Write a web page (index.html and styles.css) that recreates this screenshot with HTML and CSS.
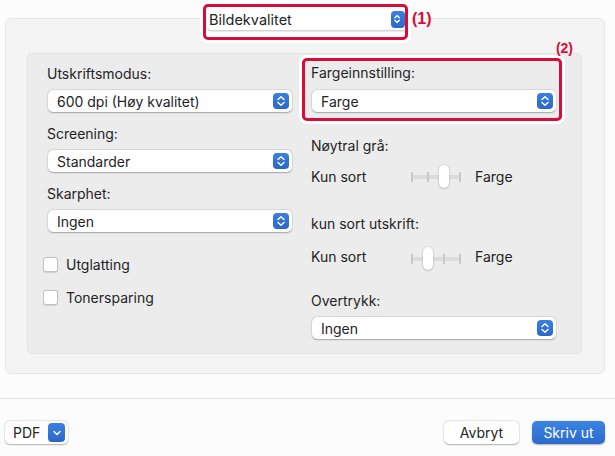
FILE: index.html
```html
<!DOCTYPE html>
<html>
<head>
<meta charset="utf-8">
<link rel="stylesheet" href="styles.css">
</head>
<body>
<div class="page">
  <div class="tab-hl">
    <div class="popup popup-top">
      <span class="pv">Bildekvalitet</span>
      <span class="arrow"><svg viewBox="0 0 16 16" width="14" height="16"><path d="M4.5 6.5 L7 4 L9.5 6.5 M4.5 9.5 L7 12 L9.5 9.5" fill="none" stroke="#fff" stroke-width="1.5" stroke-linecap="round" stroke-linejoin="round"/></svg></span>
    </div>
  </div>
  <div class="mark mark1">(1)</div>

  <div class="panel">
    <div class="inner">
      <div class="col">
        <div class="label">Utskriftsmodus:</div>
        <div class="popup"><span class="pv">600 dpi (Høy kvalitet)</span><span class="arrow"><svg viewBox="0 0 16 16" width="16" height="16"><path d="M5 6.5 L8 3.8 L11 6.5 M5 9.5 L8 12.2 L11 9.5" fill="none" stroke="#fff" stroke-width="1.5" stroke-linecap="round" stroke-linejoin="round"/></svg></span></div>
        <div class="label">Screening:</div>
        <div class="popup"><span class="pv">Standarder</span><span class="arrow"><svg viewBox="0 0 16 16" width="16" height="16"><path d="M5 6.5 L8 3.8 L11 6.5 M5 9.5 L8 12.2 L11 9.5" fill="none" stroke="#fff" stroke-width="1.5" stroke-linecap="round" stroke-linejoin="round"/></svg></span></div>
        <div class="label">Skarphet:</div>
        <div class="popup"><span class="pv">Ingen</span><span class="arrow"><svg viewBox="0 0 16 16" width="16" height="16"><path d="M5 6.5 L8 3.8 L11 6.5 M5 9.5 L8 12.2 L11 9.5" fill="none" stroke="#fff" stroke-width="1.5" stroke-linecap="round" stroke-linejoin="round"/></svg></span></div>
        <label class="check first"><span class="box"></span>Utglatting</label>
        <label class="check"><span class="box"></span>Tonersparing</label>
      </div>
      <div class="col right">
        <div class="hl">
          <div class="label">Fargeinnstilling:</div>
          <div class="popup"><span class="pv">Farge</span><span class="arrow"><svg viewBox="0 0 16 16" width="16" height="16"><path d="M5 6.5 L8 3.8 L11 6.5 M5 9.5 L8 12.2 L11 9.5" fill="none" stroke="#fff" stroke-width="1.5" stroke-linecap="round" stroke-linejoin="round"/></svg></span></div>
          <div class="mark mark2">(2)</div>
        </div>
        <div class="label l-ng">Nøytral grå:</div>
        <div class="srow s1">
          <span class="sl">Kun sort</span>
          <div class="slider">
            <span class="track"></span>
            <span class="tick t0"></span><span class="tick t1"></span><span class="tick t2"></span><span class="tick t3"></span>
            <span class="thumb th2"></span>
          </div>
          <span class="sr">Farge</span>
        </div>
        <div class="label l-ks">kun sort utskrift:</div>
        <div class="srow s2">
          <span class="sl">Kun sort</span>
          <div class="slider">
            <span class="track"></span>
            <span class="tick t0"></span><span class="tick t1"></span><span class="tick t2"></span><span class="tick t3"></span>
            <span class="thumb th1"></span>
          </div>
          <span class="sr">Farge</span>
        </div>
        <div class="label l-ov">Overtrykk:</div>
        <div class="popup"><span class="pv">Ingen</span><span class="arrow"><svg viewBox="0 0 16 16" width="16" height="16"><path d="M5 6.5 L8 3.8 L11 6.5 M5 9.5 L8 12.2 L11 9.5" fill="none" stroke="#fff" stroke-width="1.5" stroke-linecap="round" stroke-linejoin="round"/></svg></span></div>
      </div>
    </div>
  </div>

  <div class="sep"></div>

  <div class="footer">
    <div class="btn pdf"><span>PDF</span><span class="darrow"><svg viewBox="0 0 16 18" width="16" height="18"><path d="M5 7.5 L8 10.5 L11 7.5" fill="none" stroke="#fff" stroke-width="1.5" stroke-linecap="round" stroke-linejoin="round"/></svg></span></div>
    <div class="spacer"></div>
    <div class="btn cancel">Avbryt</div>
    <div class="btn primary">Skriv ut</div>
  </div>
</div>
</body>
</html>
```
FILE: styles.css
```css
html, body {
  margin: 0;
  padding: 0;
  background: #fcfcfc;
}
body {
  font-family: Inter, "Noto Sans", sans-serif;
  font-size: 14px;
  color: #242424;
  width: 615px;
  height: 456px;
  overflow: hidden;
}
.page {
  position: relative;
  padding-top: 18px;
}
.tab-hl {
  position: absolute;
  left: 203px;
  top: 4px;
  width: 199px;
  height: 30px;
  border: 3px solid #d80c3a;
  border-radius: 5px;
  background: #fff;
  box-shadow: 0 0 0 3px #fff;
  overflow: hidden;
  z-index: 2;
}
.tab-hl .popup-top {
  margin: 1px 0 0 1px;
  height: 22px;
  padding: 0 0 0 2px;
  border-radius: 4px 0 0 4px;
  box-shadow: 0 1.5px 0 #d4d4d4;
  font-size: 14.5px;
}
.mark {
  position: absolute;
  color: #d80c3a;
  font-weight: 700;
  font-size: 14px;
  font-family: "Liberation Sans", Arial, sans-serif;
  line-height: 16px;
}
.mark1 {
  left: 412px;
  top: 11px;
  font-size: 16px;
}
.panel {
  margin: 0 10px 0 5px;
  height: 356px;
  padding: 34px 22px 0 21px;
  background: #f4f4f4;
  border: 1px solid #e6e6e6;
  border-radius: 6px;
  box-sizing: border-box;
}
.inner {
  height: 301px;
  background: #ececec;
  border: 1px solid #e2e2e2;
  border-radius: 5px;
  display: flex;
  gap: 19px;
  padding: 12px 0 0 19px;
  box-sizing: border-box;
}
.col {
  width: 245px;
  display: flex;
  flex-direction: column;
}
.label {
  line-height: 16px;
  height: 16px;
  white-space: nowrap;
}
.popup {
  display: flex;
  align-items: center;
  height: 22px;
  margin-left: 1px;
  padding: 0 3px 0 9px;
  background: #fff;
  border-radius: 5px;
  box-shadow: 0 0.5px 1.5px rgba(0,0,0,0.28), 0 0 0 0.5px rgba(0,0,0,0.08);
  box-sizing: border-box;
}
.col > .popup, .hl > .popup {
  margin-top: 8px;
  margin-bottom: 14px;
}
.pv {
  flex: 1;
  white-space: nowrap;
}
.arrow {
  width: 16px;
  height: 16px;
  border-radius: 4px;
  background: linear-gradient(#3a80e0, #2a68c8);
  display: flex;
  align-items: center;
  justify-content: center;
}
.popup-top .arrow {
  width: 14px;
  height: 17px;
}
.check {
  display: flex;
  align-items: center;
  height: 20px;
  margin-left: -4px;
  margin-top: 13px;
  gap: 8px;
}
.check.first {
  margin-top: 8px;
}
.box {
  width: 13px;
  height: 13px;
  background: #fff;
  border: 0.5px solid #c2c2c2;
  border-radius: 3px;
  box-shadow: 0 0.5px 1px rgba(0,0,0,0.12);
}
.hl {
  position: relative;
  margin: -8px -6px 0 -9px;
  padding: 4px 3px 6px 6px;
  border: 3px solid #d80c3a;
  border-radius: 5px;
  box-shadow: 0 0 0 3px #fff;
}
.hl > .popup {
  margin-top: 9px;
  margin-bottom: 0;
}
.mark2 {
  right: -14px;
  top: -21px;
}
.l-ng { margin-top: 17px; }
.srow {
  display: flex;
  align-items: center;
  height: 24px;
}
.s1 { margin-top: 10px; }
.l-ks { margin-top: 28px; }
.s2 { margin-top: 12px; }
.l-ov { margin-top: 25px; }
.sl { width: 100px; }
.sr { margin-left: 13px; }
.slider {
  position: relative;
  width: 51px;
  height: 24px;
}
.s1 .slider { top: 1px; }
.s2 .slider { top: 3px; }
.track {
  position: absolute;
  left: 1px;
  right: 1px;
  top: 10px;
  height: 4px;
  border-radius: 2px;
  background: #dcdcdc;
}
.tick {
  position: absolute;
  top: 7px;
  width: 2px;
  height: 10px;
  background: #c9c9c9;
}
.t0 { left: 0; }
.t1 { left: 16px; }
.t2 { left: 32px; }
.t3 { left: 48px; }
.thumb {
  position: absolute;
  top: 0;
  width: 10px;
  height: 23px;
  border-radius: 5px;
  background: #fff;
  box-shadow: 0 0.5px 2px rgba(0,0,0,0.35);
}
.th1 { left: 12px; }
.th2 { left: 28px; }
.sep {
  margin-top: 24px;
  height: 1px;
  background: #e2e2e2;
}
.footer {
  display: flex;
  align-items: center;
  padding: 22px 10px 0 5px;
  gap: 13px;
}
.spacer { flex: 1; }
.btn {
  height: 23px;
  border-radius: 5px;
  display: flex;
  align-items: center;
  justify-content: center;
  box-sizing: border-box;
  background: #fff;
  box-shadow: 0 0.5px 1.5px rgba(0,0,0,0.28), 0 0 0 0.5px rgba(0,0,0,0.08);
  white-space: nowrap;
}
.pdf {
  width: 63px;
  justify-content: space-between;
  padding: 0 3px 0 8px;
}
.darrow {
  width: 17px;
  height: 19px;
  border-radius: 4px;
  background: linear-gradient(#3a80e0, #2a68c8);
  display: flex;
  align-items: center;
  justify-content: center;
}
.cancel {
  width: 75px;
}
.primary {
  width: 73px;
  color: #fff;
  background: linear-gradient(#3c84e3, #2a6acb);
  box-shadow: 0 0.5px 1.5px rgba(0,0,0,0.3);
}
```
